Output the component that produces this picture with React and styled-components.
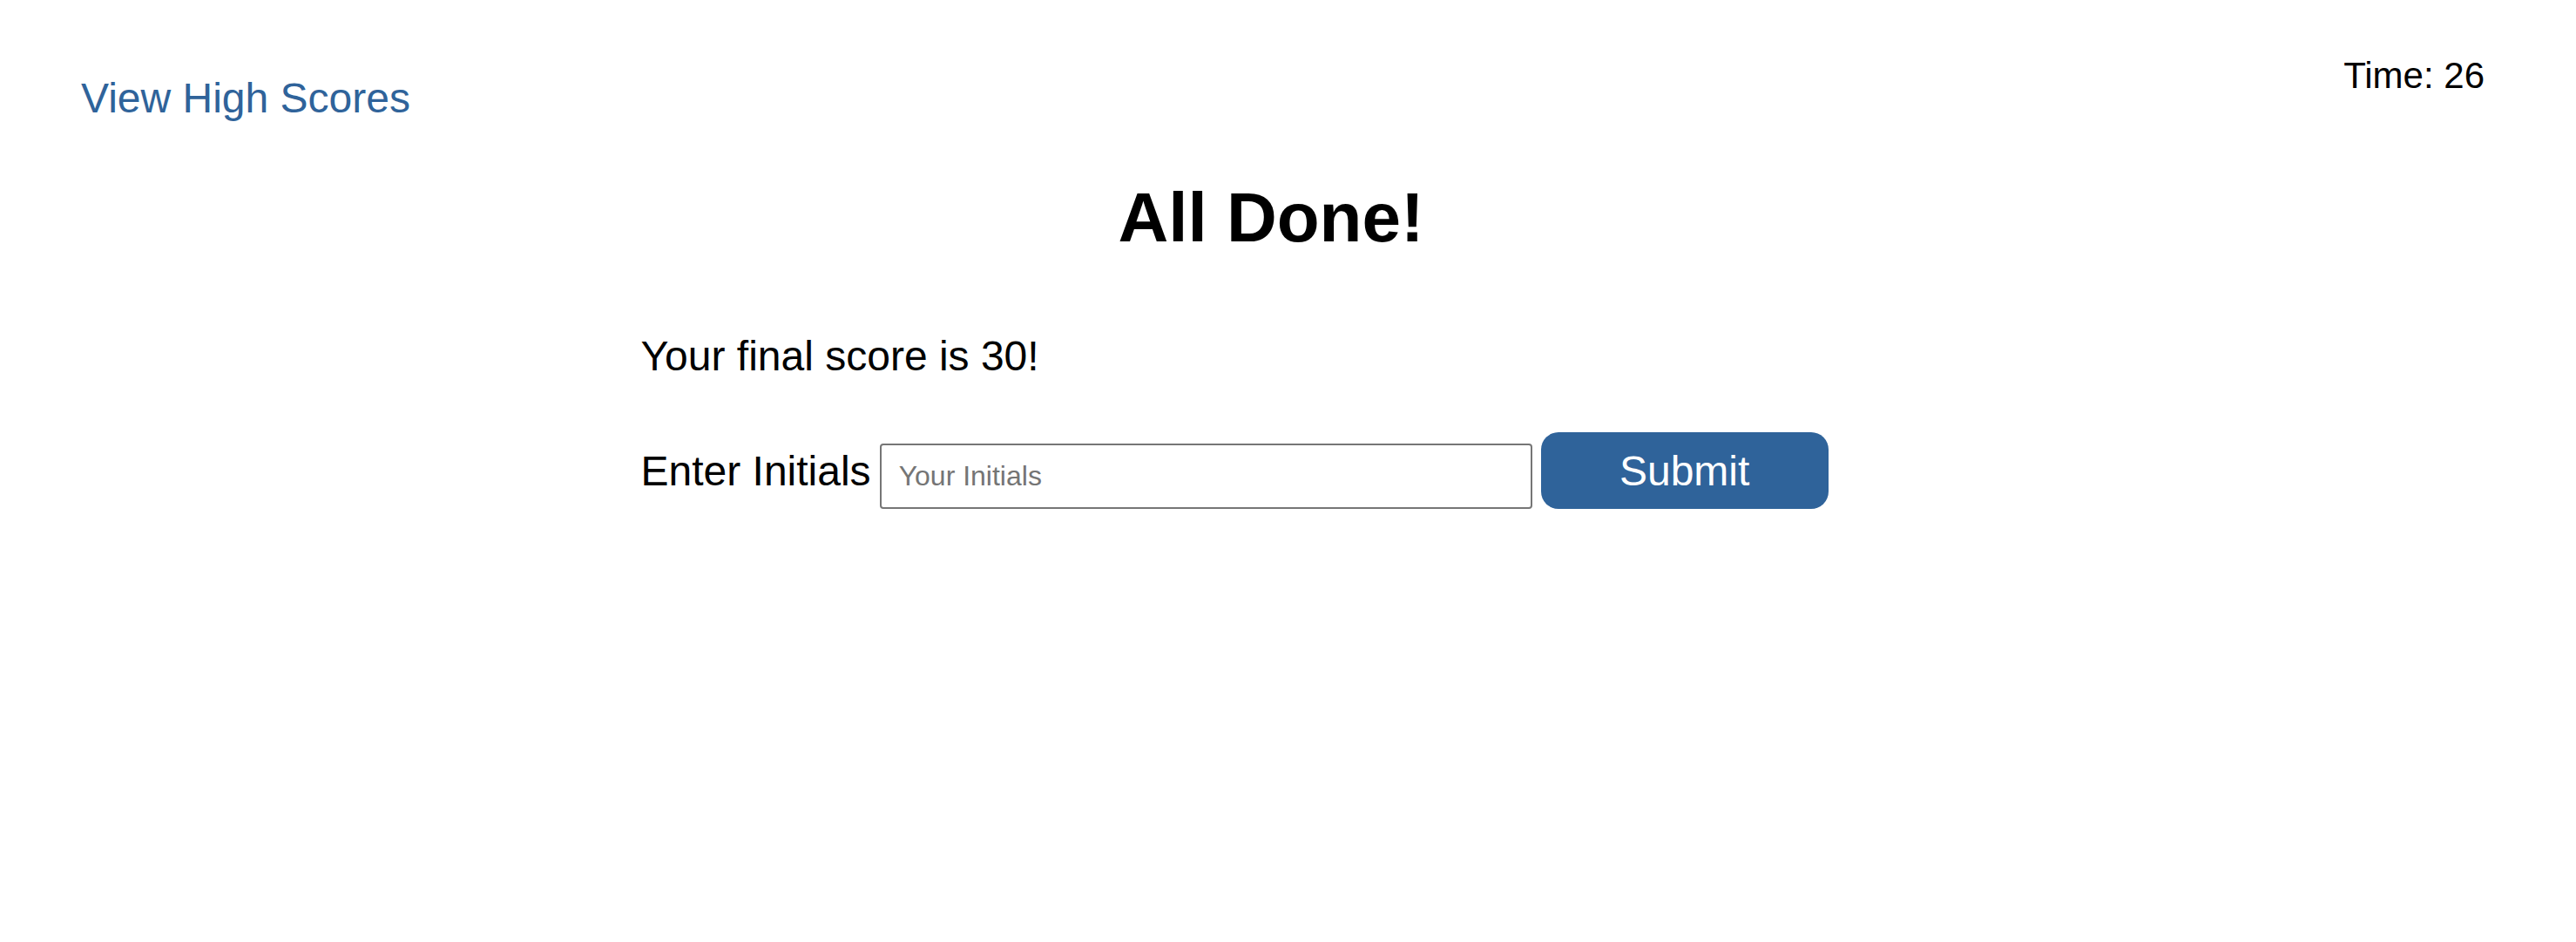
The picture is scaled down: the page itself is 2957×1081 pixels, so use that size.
import React, { useState } from 'react';
import styled, { createGlobalStyle } from 'styled-components';

const GlobalStyle = createGlobalStyle`
  html, body {
    margin: 0;
    padding: 0;
    background: #ffffff;
  }
  body {
    font-family: "Liberation Sans", Arial, Helvetica, sans-serif;
    color: #000000;
  }
  * {
    box-sizing: border-box;
  }
`;

const App = () => {
    const [initials, setInitials] = useState('');
    return (
        <Page>
            <GlobalStyle />
            <Header>
                <HighScores href="#">View High Scores</HighScores>
                <Timer>Time: 26</Timer>
            </Header>
            <Main>
                <Title>All Done!</Title>
                <Score>Your final score is 30!</Score>
                <Form onSubmit={(e) => e.preventDefault()}>
                    <Label htmlFor="initials">Enter Initials</Label>
                    <Input
                        id="initials"
                        placeholder="Your Initials"
                        value={initials}
                        onChange={(e) => setInitials(e.target.value)}
                    />
                    <SubmitBtn type="submit">Submit</SubmitBtn>
                </Form>
            </Main>
        </Page>
    );
};

export default App;

const Page = styled.div`
    min-height: 1081px;
    padding-right: 39px;
`
const Header = styled.header`
    display: flex;
    justify-content: space-between;
    align-items: flex-start;
    padding: 63px 66px 0 93px;
`
const HighScores = styled.a`
    margin-top: 22px;
    font-size: 48px;
    color: #2f639a;
    text-decoration: none;
`
const Timer = styled.div`
    font-size: 42px;
`
const Main = styled.main`
    width: 50%;
    margin: 0 auto;
    padding-left: 6px;
`
const Title = styled.h1`
    margin: 64px 0 0 -6px;
    font-size: 80px;
    font-weight: 700;
    text-align: center;
`
const Score = styled.p`
    margin: 85px 0 0;
    font-size: 48px;
`
const Form = styled.form`
    display: flex;
    align-items: baseline;
    gap: 10px;
    margin-top: 60px;
`
const Label = styled.label`
    font-size: 48px;
`
const Input = styled.input`
    width: 749px;
    height: 75px;
    padding: 0 20px;
    font-family: inherit;
    font-size: 32px;
    border: 2px solid #767676;
    border-radius: 4px;
    color: #000;
    &::placeholder {
        color: #757575;
    }
`
const SubmitBtn = styled.button`
    width: 330px;
    height: 88px;
    font-family: inherit;
    font-size: 48px;
    color: #ffffff;
    background: #2f639a;
    border: none;
    border-radius: 20px;
    cursor: pointer;
`
